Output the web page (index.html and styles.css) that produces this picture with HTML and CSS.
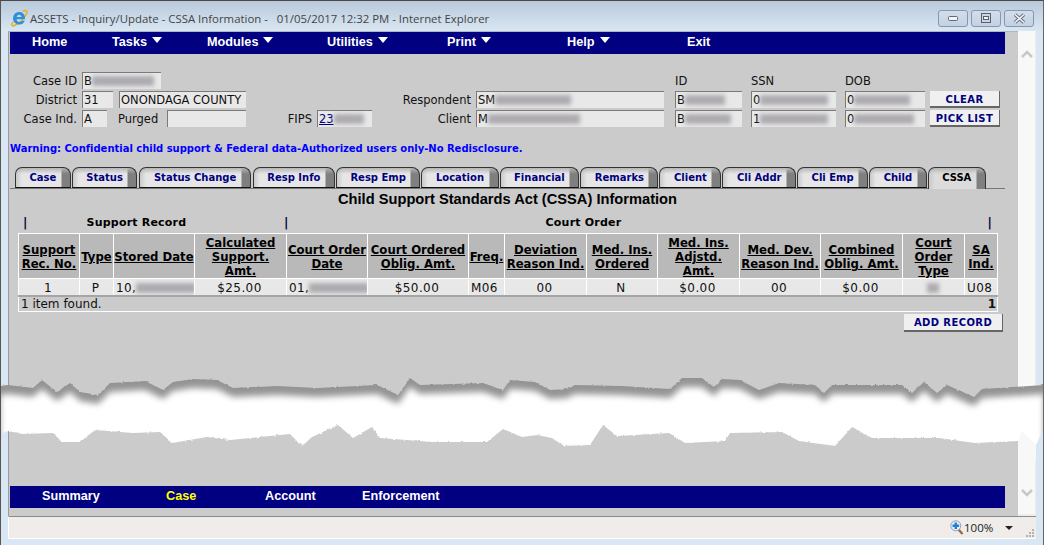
FILE: index.html
```html
<!DOCTYPE html>
<html>
<head>
  <title>ASSETS - Inquiry/Update - CSSA Information</title>
  <link rel="stylesheet" href="styles.css">
</head>
<body>
  <div class="window">
    <div class="titlebar">
      <svg class="ie-logo" width="18" height="18" viewBox="0 0 18 18">
        <path d="M3 13C.5 16.500 2 17.800 5.500 16c4.500-2.300 9-7.500 11-11.300 1.300-2.600-.2-4-3.800-2.500" fill="none" stroke="#e6b022" stroke-width="1.500"/>
        <path d="M3 9.500C3 5.800 5.700 3 9.300 3c3.500 0 6 2.700 5.700 7.300H6.600c.1 1.700 1.300 2.800 2.900 2.800 1.100 0 1.900-.5 2.400-1.300h2.900c-.8 2.300-2.900 3.700-5.400 3.700C5.700 15.500 3 12.900 3 9.500zM6.700 8.100h4.900C11.500 6.700 10.500 5.700 9.200 5.700c-1.300 0-2.300 1-2.500 2.400z" fill="#2f8fd8" fill-rule="evenodd"/>
      </svg>
      <span class="title-text">ASSETS - Inquiry/Update - CSSA Information -&nbsp;&nbsp; 01/05/2017 12:32 PM - Internet Explorer</span>
      <div class="caption-btns">
        <div class="caption-btn"><svg width="12" height="8" viewBox="0 0 12 8"><rect x="1.500" y="2.500" width="9" height="4" rx="1" fill="#f2f4f7" stroke="#5d6a7c"/></svg></div>
        <div class="caption-btn"><svg width="12" height="12" viewBox="0 0 12 12"><rect x="1.500" y="1.500" width="9" height="9" fill="#ccd6e2" stroke="#55606f"/><rect x="3.500" y="4.500" width="5" height="3" fill="#f2f4f7" stroke="#55606f"/></svg></div>
        <div class="caption-btn"><svg width="13" height="11" viewBox="0 0 13 11"><path d="M2 1.500l9 8M11 1.500l-9 8" stroke="#5d6a7c" stroke-width="3.400"/><path d="M2 1.500l9 8M11 1.500l-9 8" stroke="#f2f4f7" stroke-width="1.600"/></svg></div>
      </div>
    </div>

    <div class="client">
      <div class="client-row">
        <div class="page">
          <div class="nav">
            <a class="nav-item w80">Home</a>
            <a class="nav-item w95 menu">Tasks</a>
            <a class="nav-item w120 menu">Modules</a>
            <a class="nav-item w120 menu">Utilities</a>
            <a class="nav-item w120 menu">Print</a>
            <a class="nav-item w120 menu">Help</a>
            <a class="nav-item w120">Exit</a>
          </div>

          <div class="case-form">
            <label class="lbl c1">Case ID</label>
            <div class="field f79 c2">B<span class="blur w62"></span></div>
            <label class="top-lbl c9">ID</label>
            <label class="top-lbl c10">SSN</label>
            <label class="top-lbl c11">DOB</label>

            <label class="lbl c1">District</label>
            <div class="field f31 c2">31</div>
            <div class="field f127 c3">ONONDAGA COUNTY</div>
            <label class="lbl c7">Respondent</label>
            <div class="field f188 c8">SM<span class="blur w76"></span></div>
            <div class="field f67 c9">B<span class="blur w40"></span></div>
            <div class="field f85 c10">0<span class="blur w68"></span></div>
            <div class="field f80 c11">0<span class="blur w56"></span></div>
            <button class="btn f70 c12">CLEAR</button>

            <label class="lbl c1">Case Ind.</label>
            <div class="field f25 c2">A</div>
            <label class="purged c3">Purged</label>
            <div class="field f79 c4"></div>
            <label class="lbl c5">FIPS</label>
            <div class="field f55 c6"><a class="fips">23<span class="blur w30"></span></a></div>
            <label class="lbl c7">Client</label>
            <div class="field f188 c8">M<span class="blur w92"></span></div>
            <div class="field f67 c9">B<span class="blur w46"></span></div>
            <div class="field f85 c10">1<span class="blur w68"></span></div>
            <div class="field f80 c11">0<span class="blur w60"></span></div>
            <button class="btn f70 c12">PICK LIST</button>
          </div>

          <p class="warning">Warning: Confidential child support &amp; Federal data-Authorized users only-No Redisclosure.</p>

          <div class="tabs">
            <a class="tab">Case</a>
            <a class="tab">Status</a>
            <a class="tab t-gap">Status Change</a>
            <a class="tab t-gap">Resp Info</a>
            <a class="tab">Resp Emp</a>
            <a class="tab">Location</a>
            <a class="tab">Financial</a>
            <a class="tab">Remarks</a>
            <a class="tab">Client</a>
            <a class="tab">Cli Addr</a>
            <a class="tab">Cli Emp</a>
            <a class="tab">Child</a>
            <a class="tab active">CSSA</a>
          </div>

          <h1 class="heading">Child Support Standards Act (CSSA) Information</h1>

          <div class="groups">
            <div class="group g1"><b class="bar">|</b><b class="group-name">Support Record</b></div>
            <div class="group g2"><b class="bar">|</b><b class="group-name">Court Order</b><b class="bar end">|</b></div>
          </div>

          <table class="records">
            <colgroup>
              <col><col><col><col><col><col><col><col><col><col><col><col><col><col>
            </colgroup>
            <thead>
              <tr>
                <th><a>Support<br>Rec. No.</a></th>
                <th><a>Type</a></th>
                <th><a>Stored Date</a></th>
                <th><a>Calculated<br>Support.<br>Amt.</a></th>
                <th><a>Court Order<br>Date</a></th>
                <th><a>Court Ordered<br>Oblig. Amt.</a></th>
                <th><a>Freq.</a></th>
                <th><a>Deviation<br>Reason Ind.</a></th>
                <th><a>Med. Ins.<br>Ordered</a></th>
                <th><a>Med. Ins.<br>Adjstd.<br>Amt.</a></th>
                <th><a>Med. Dev.<br>Reason Ind.</a></th>
                <th><a>Combined<br>Oblig. Amt.</a></th>
                <th><a>Court<br>Order<br>Type</a></th>
                <th><a>SA<br>Ind.</a></th>
              </tr>
            </thead>
            <tbody>
              <tr>
                <td>1</td>
                <td>P</td>
                <td class="left">10,<span class="blur w60"></span></td>
                <td>$25.00</td>
                <td class="left">01,<span class="blur w60"></span></td>
                <td>$50.00</td>
                <td class="left">M06</td>
                <td>00</td>
                <td>N</td>
                <td>$0.00</td>
                <td>00</td>
                <td>$0.00</td>
                <td><span class="blur w12"></span></td>
                <td class="left">U08</td>
              </tr>
              <tr class="foot">
                <td colspan="13" class="left">1 item found.</td>
                <td class="count"><b>1</b></td>
              </tr>
            </tbody>
          </table>

          <div class="add-row"><button class="btn add">ADD RECORD</button></div>

          <div class="spacer"></div>

          <div class="nav bottom">
            <a class="nav-item w124">Summary</a>
            <a class="nav-item w99 current">Case</a>
            <a class="nav-item w97">Account</a>
            <a class="nav-item">Enforcement</a>
          </div>
        </div>

        <div class="scrollbar">
          <svg width="12" height="9" viewBox="0 0 12 9"><path d="M1 8l5-5 5 5" fill="none" stroke="#c8c8c8" stroke-width="2.500"/></svg>
          <svg width="12" height="9" viewBox="0 0 12 9"><path d="M1 1l5 5 5-5" fill="none" stroke="#c8c8c8" stroke-width="2.500"/></svg>
        </div>
      </div>

      <div class="status">
        <svg width="14" height="15" viewBox="0 0 14 15">
          <path d="M8.500 9.500l4 4.500" stroke="#a0683a" stroke-width="2.400"/>
          <circle cx="5.800" cy="5.800" r="5" fill="#e6eef6" stroke="#8fa3b8"/>
          <path d="M5.800 2.500v6.600M2.500 5.800h6.600" stroke="#1f7fd6" stroke-width="2.400"/>
        </svg>
        <span class="zoom-val">100%</span>
        <span class="zoom-arrow"></span>
        <svg class="grip" width="9" height="9" viewBox="0 0 9 9" fill="#b5b2ae"><rect x="6" y="0" width="2" height="2"/><rect x="3" y="3" width="2" height="2"/><rect x="6" y="3" width="2" height="2"/><rect x="0" y="6" width="2" height="2"/><rect x="3" y="6" width="2" height="2"/><rect x="6" y="6" width="2" height="2"/></svg>
      </div>
    </div>

    <!-- torn paper effect over the middle of the window -->
    <svg class="tear" width="1044" height="90" viewBox="0 370 1044 90">
      <defs>
        <filter id="soft" x="-5%" y="-20%" width="110%" height="140%"><feGaussianBlur stdDeviation="3"/></filter>
        <filter id="rough" x="0" y="-10%" width="100%" height="120%">
          <feTurbulence type="fractalNoise" baseFrequency="0.3" numOctaves="2" seed="4"/>
          <feDisplacementMap in="SourceGraphic" scale="2.500" yChannelSelector="G" xChannelSelector="R"/>
        </filter>
        <path id="edge" d="M0 386L8 385L33 388L42 380L57 392L70 383L80 392L98 395L110 383L145 381L163 390L173 382L193 379L217 380L233 388L277 386L317 388L377 385L398 395L410 378L420 385L483 383L503 390L510 380L535 382L550 390L567 389L575 385L622 386L670 389L682 378L702 378L714 387L722 379L740 380L759 390L779 383L815 385L824 393L832 385L902 385L912 393L924 382L937 393L947 385L974 397L982 389L1044 385V440H0Z"/>
      </defs>
      <use href="#edge" fill="#949494" filter="url(#rough)"/>
      <use href="#edge" fill="#fff" filter="url(#soft)" transform="translate(0 9)"/>
      <path d="M8 460V431L23 434L53 433L62 442L80 442L95 430L133 433L160 432L172 443L207 437L230 440L290 434L302 446L312 437L338 425L353 438L372 427L380 438L433 442L487 442L503 429L522 437L537 435L552 438L564 446L590 445L603 425L617 436L669 433L685 443L725 441L730 433L782 432L799 441L835 446L852 427L872 438L939 438L975 443L1018 441V460Z" fill="#cbcbcb" filter="url(#rough)"/>
      <path d="M1018 460V441L1022 431L1036 445V460Z" fill="#f8f8f8"/>
      <path d="M1036 460V445L1044 428V460Z" fill="#d9e6f3"/>
      <path d="M0 460V445L3 433L8 431V460Z" fill="#d9e6f3"/>
      <path d="M0 460V445H1V460Z" fill="#555"/>
      <path d="M8 460V431H9V460Z" fill="#9a9a9a"/>
    </svg>
  </div>
</body>
</html>
```

FILE: styles.css
```css
html, body {
  margin: 0;
  height: 100%;
  overflow: hidden;
}
body {
  font-family: "DejaVu Sans", sans-serif;
  font-size: 12px;
  color: #111;
}
a { color: inherit; }

.window {
  position: relative;
  width: 1044px;
  height: 545px;
  box-sizing: border-box;
  display: flex;
  flex-direction: column;
  background: #d9e6f3;
  border-top: 1px solid #4a4a4a;
  border-left: 1px solid #555;
  border-right: 1px solid #666;
  overflow: hidden;
}

/* title bar */
.titlebar {
  height: 30px;
  flex: none;
  box-sizing: border-box;
  display: flex;
  align-items: center;
  padding: 4px 9px 0 9px;
  background: linear-gradient(#b9c9da, #d9e7f4);
}
.ie-logo { margin-right: 2px; }
.title-text {
  font-family: "Open Sans", sans-serif;
  font-size: 11.4px;
  color: #444;
  white-space: nowrap;
}
.caption-btns {
  margin-left: auto;
  display: flex;
  gap: 3px;
}
.caption-btn {
  width: 28px;
  height: 15px;
  display: flex;
  align-items: center;
  justify-content: center;
  border: 1px solid #8697ae;
  border-radius: 3px;
  background: linear-gradient(#d3deea, #c3d1e1);
}

/* client area */
.client {
  flex: 1;
  display: flex;
  flex-direction: column;
  margin: 0 7px 6px 7px;
  min-height: 0;
}
.client-row {
  flex: 1;
  display: flex;
  min-height: 0;
  background: #f0ecea;
}
.page {
  width: 1010px;
  box-sizing: border-box;
  display: flex;
  flex-direction: column;
  background: #cbcbcb;
  border-left: 1px solid #9a9a9a;
  border-top: 1px solid #aeb6c0;
  padding: 0 0 8px 1px;
}
.scrollbar {
  width: 17px;
  display: flex;
  flex-direction: column;
  justify-content: space-between;
  align-items: center;
  padding: 18px 0 16px;
  box-sizing: border-box;
  background: #f8f8f8;
  margin-bottom: 2px;
}

.nav {
  width: 995px;
  height: 22px;
  flex: none;
  display: flex;
  align-items: center;
  padding: 0 0 3px 22px;
  box-sizing: border-box;
  background: #000080;
}
.nav.bottom { padding-left: 32px; }
.nav-item {
  display: block;
  font-family: "Liberation Sans", sans-serif;
  font-size: 12.7px;
  font-weight: bold;
  color: #fff;
  white-space: nowrap;
}
.nav-item.menu::after {
  content: "";
  display: inline-block;
  margin-left: 5px;
  vertical-align: 3px;
  border-left: 5px solid transparent;
  border-right: 5px solid transparent;
  border-top: 6px solid #fff;
}
.nav-item.current { color: #ffff00; }
.w80 { width: 80px; }
.w95 { width: 95px; }
.w120 { width: 120px; }
.w124 { width: 124px; }
.w99 { width: 99px; }
.w97 { width: 97px; }

/* case header form */
.case-form {
  margin-top: 18px;
  display: grid;
  grid-template-columns: 72px 37px 48px 79px 71px 55px 104px 199px 76px 94px 85px 70px;
  grid-auto-rows: 17px;
  row-gap: 2px;
  align-items: center;
  font-size: 11.5px;
}
.lbl {
  text-align: right;
  padding-right: 5px;
}
.purged { margin-left: -1px; }
.c1 { grid-column: 1; }
.c2 { grid-column: 2; }
.c3 { grid-column: 3; }
.c4 { grid-column: 4; }
.c5 { grid-column: 5; }
.c6 { grid-column: 6; }
.c7 { grid-column: 7; }
.c8 { grid-column: 8; }
.c9 { grid-column: 9; }
.c10 { grid-column: 10; }
.c11 { grid-column: 11; }
.c12 { grid-column: 12; }
.c2.f79 { grid-column: 2 / span 2; }
.c3.f127 { grid-column: 3 / span 2; }
.field {
  height: 17px;
  box-sizing: border-box;
  background: #e8e8e8;
  border-top: 1px solid #7a7a7a;
  border-left: 1px solid #7a7a7a;
  padding-left: 1px;
  line-height: 17px;
  white-space: nowrap;
  overflow: hidden;
}
.f25 { width: 25px; }
.f31 { width: 31px; }
.f55 { width: 55px; }
.f67 { width: 67px; }
.f70 { width: 70px; }
.f79 { width: 79px; }
.f80 { width: 80px; }
.f85 { width: 85px; }
.f127 { width: 127px; }
.f188 { width: 188px; }
.fips { color: #000080; text-decoration: underline; }

.blur {
  display: inline-block;
  height: 10px;
  vertical-align: -1px;
  background: #aeabb0;
  filter: blur(2px);
}
.w12 { width: 12px; }
.w30 { width: 30px; }
.w40 { width: 40px; }
.w46 { width: 46px; }
.w56 { width: 56px; }
.w60 { width: 60px; }
.w62 { width: 62px; }
.w68 { width: 68px; }
.w76 { width: 76px; }
.w92 { width: 92px; }

.btn {
  height: 17px;
  padding: 1px 0 0;
  background: #f0f0f0;
  border: none;
  border-right: 1px solid #666;
  border-bottom: 2px solid #666;
  font-family: "DejaVu Sans", sans-serif;
  font-size: 10px;
  font-weight: bold;
  color: #000080;
  letter-spacing: 0.4px;
}

.warning {
  margin: 16px 0 0;
  font-size: 10px;
  line-height: 12px;
  font-weight: bold;
  letter-spacing: -0.02px;
  color: #0000ff;
  white-space: nowrap;
}

/* tabs */
.tabs {
  width: 995px;
  margin-top: 12px;
  padding-left: 5px;
  box-sizing: border-box;
  display: flex;
  gap: 1px;
  height: 22px;
  border-bottom: 1px solid #777;
}
.tab {
  height: 21px;
  padding: 0 13.5px;
  box-sizing: border-box;
  border: 1px solid #333;
  border-bottom: 1px solid #111;
  border-radius: 7px 8px 0 0;
  background:
    linear-gradient(#b5b5b5, rgba(229, 229, 229, 0) 6px),
    linear-gradient(90deg, #c9c9c9, #e6e6e6 6px, #e6e6e6 calc(100% - 9px), #7f7f7f calc(100% - 8px), #7f7f7f);
  font-size: 10px;
  line-height: 20px;
  font-weight: bold;
  color: #000080;
  white-space: nowrap;
}
.tab.t-gap { margin-left: 1px; }
.tab.active {
  height: 22px;
  border-bottom: none;
  color: #000;
  background:
    linear-gradient(#b5b5b5, rgba(220, 220, 220, 0) 6px),
    linear-gradient(90deg, #c9c9c9, #dcdcdc 6px, #dcdcdc calc(100% - 9px), #7f7f7f calc(100% - 8px), #7f7f7f);
}

.heading {
  margin: 2px 0 0;
  width: 995px;
  font-family: "Liberation Sans", sans-serif;
  font-size: 14.67px;
  line-height: 17px;
  font-weight: bold;
  text-align: center;
  color: #000;
}

.groups {
  display: flex;
  margin: 8px 0 0 13px;
  height: 14px;
  font-size: 11px;
  line-height: 14px;
  letter-spacing: 0.2px;
  color: #000;
}
.group { display: flex; }
.g1 { width: 261px; }
.g2 { width: 708px; }
.bar { color: #000033; font-size: 12px; }
.g1 .group-name { margin-left: 59px; }
.g2 .group-name { margin-left: 257px; }
.bar.end { margin-left: auto; }

/* records table */
.records {
  margin: 3px 0 0 8px;
  width: 979px;
  table-layout: fixed;
  border-collapse: collapse;
  flex: none;
}
.records col:nth-child(1) { width: 61px; }
.records col:nth-child(2) { width: 34px; }
.records col:nth-child(3) { width: 81px; }
.records col:nth-child(4) { width: 92px; }
.records col:nth-child(5) { width: 81px; }
.records col:nth-child(6) { width: 101px; }
.records col:nth-child(7) { width: 36px; }
.records col:nth-child(8) { width: 82px; }
.records col:nth-child(9) { width: 71px; }
.records col:nth-child(10) { width: 82px; }
.records col:nth-child(11) { width: 81px; }
.records col:nth-child(12) { width: 82px; }
.records col:nth-child(13) { width: 62px; }
.records col:nth-child(14) { width: 33px; }
.records th, .records td {
  border: 1px solid #fff;
  padding: 0;
  overflow: hidden;
  white-space: nowrap;
  text-align: center;
}
.records th {
  height: 41px;
  padding-top: 2px;
  background: #b9b9b9;
  font-size: 11.7px;
  line-height: 14px;
  color: #000;
}
.records th a { text-decoration: underline; }
.records td {
  height: 14px;
  padding: 2px 2px 0 0;
  background: #e8e8e8;
  line-height: 14px;
  letter-spacing: 0.4px;
}
.records td.left { text-align: left; padding: 2px 0 0 2px; }
.records .foot td {
  height: 13px;
  padding-top: 0;
  background: #cbcbcb;
  border-top: 2px solid #a5a5a5;
  border-left: 1px solid #fff;
  border-right: none;
  letter-spacing: 0;
}
.records .foot td.count {
  text-align: right;
  border-left: none;
  border-right: 1px solid #fff;
  padding-right: 1px;
}

.add-row {
  width: 993px;
  margin-top: 2px;
  display: flex;
  justify-content: flex-end;
}
.btn.add { width: 99px; height: 18px; padding: 0; }

.spacer { flex: 1; }

/* status bar */
.status {
  height: 23px;
  flex: none;
  box-sizing: border-box;
  display: flex;
  align-items: center;
  background: #efecea;
  border-top: 1px solid #8a8a8a;
  border-left: 1px solid #fff;
  border-bottom: 1px solid #fff;
  font-family: "Open Sans", sans-serif;
  padding-left: 941px;
  position: relative;
}
.zoom-val { font-size: 11.5px; color: #222; }
.zoom-arrow {
  margin-left: 12px;
  border-left: 4px solid transparent;
  border-right: 4px solid transparent;
  border-top: 4px solid #222;
}
.grip { position: absolute; right: 1px; bottom: 0; }

/* torn paper */
.tear {
  position: absolute;
  left: -1px;
  top: 369px;
}
```
